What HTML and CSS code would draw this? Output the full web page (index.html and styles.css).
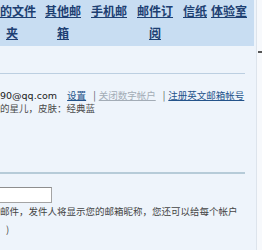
FILE: index.html
```html
<!DOCTYPE html>
<html lang="zh-CN">
<head>
<meta charset="utf-8">
<title>设置</title>
<link rel="stylesheet" href="styles.css">
</head>
<body>
<div class="page">
  <div class="main">
    <div class="tabs">
      <a class="tab t1" href="#">的文件夹</a>
      <a class="tab t2" href="#">其他邮箱</a>
      <a class="tab t3" href="#">手机邮</a>
      <a class="tab t4" href="#">邮件订阅</a>
      <a class="tab t5" href="#">信纸</a>
      <a class="tab t6" href="#">体验室</a>
    </div>
    <div class="content">
      <div class="sec sec1">
        <div class="row">
          <span class="mail">90@qq.com</span>
          <a class="lnk first" href="#">设置</a><span class="sep">|</span><a class="lnk off" href="#">关闭数字帐户</a><span class="sep">|</span><a class="lnk" href="#">注册英文邮箱帐号</a>
        </div>
        <div class="row sub">的星儿，皮肤：经典蓝</div>
      </div>
      <div class="sec sec2">
        <input class="field" type="text">
        <p class="note">邮件，发件人将显示您的邮箱昵称，您还可以给每个帐户</p>
        <p class="note close">)</p>
      </div>
    </div>
  </div>
  <div class="side"><span class="tick"></span></div>
</div>
</body>
</html>
```

FILE: styles.css
```css
html, body {
  margin: 0;
  padding: 0;
  background: #f6f8fb;
  overflow: hidden;
}
body {
  font-family: "Noto Sans CJK SC", "DejaVu Sans", sans-serif;
}
.page {
  display: flex;
  width: 262px;
  height: 250px;
}
.main {
  width: 256px;
  flex: none;
  background: #eef4fb;
}
.side {
  flex: 1;
  border-left: 1px solid #dde4ec;
  background: #f7f9fc;
  padding-top: 51px;
}
.tick {
  display: block;
  width: 4px;
  height: 2px;
  margin-left: 1px;
  background: #555;
}
.tabs {
  display: flex;
  align-items: flex-start;
  height: 46px;
  width: 254px;
  background: #c8ddf2;
}
.tab {
  flex: none;
  text-align: center;
  font-size: 12px;
  line-height: 22px;
  font-weight: bold;
  color: #1d3f72;
  text-decoration: underline;
  word-break: break-all;
}
.t1 {
  width: 36px;
  padding-left: 6px;
  text-indent: -6px;
  text-align: left;
}
.t2 { width: 36px; margin-left: 3px; }
.t3 { width: 36px; margin-left: 10px; }
.t4 { width: 36px; margin-left: 10px; }
.t5 { width: 24px; margin-left: 10px; }
.t6 { width: 36px; margin-left: 4px; }

.content {
  padding-right: 11px;
}
.sec1 {
  margin-top: 27px;
  border-top: 1px solid #bccfe1;
  padding-top: 15px;
}
.row {
  font-size: 9.5px;
  line-height: 13px;
  color: #222;
  white-space: nowrap;
}
.mail {
  font-family: "DejaVu Sans", sans-serif;
  font-size: 9.5px;
  color: #222;
}
.lnk {
  color: #24538a;
  text-decoration: underline;
}
.lnk.first { margin-left: 8px; }
.lnk.off { color: #a3acb6; }
.sep {
  color: #555;
  margin: 0 3px 0 7px;
}
.sub {
  color: #4a4a4a;
}
.sec2 {
  margin-top: 57px;
  border-top: 2px solid #b6cbd8;
  padding-top: 13px;
}
.field {
  display: block;
  box-sizing: border-box;
  width: 62px;
  height: 16px;
  margin: 0 0 0 -10px;
  border: 1px solid #a4a4a4;
  border-top-color: #8e8e8e;
  background: #fff;
  padding: 0;
}
.note {
  margin: 0;
  font-size: 9.5px;
  line-height: 14px;
  color: #444;
  white-space: nowrap;
}
.note:first-of-type {
  margin-top: 1px;
}
.close {
  margin-top: 4px;
  padding-left: 6px;
}
```
